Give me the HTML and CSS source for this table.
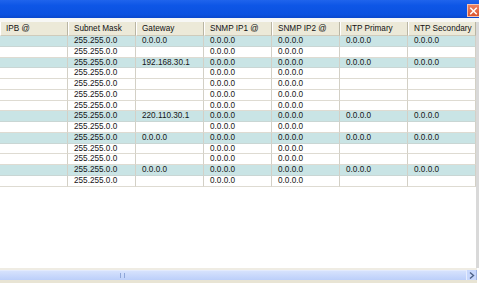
FILE: index.html
```html
<!DOCTYPE html>
<html>
<head>
<meta charset="utf-8">
<link rel="stylesheet" href="styles.css">
</head>
<body>
<div class="window">
  <div class="titlebar">
    <div class="close"><svg width="12" height="12" viewBox="0 0 12 12"><path d="M3 3 L9 9 M9 3 L3 9" stroke="#fff" stroke-width="1.6" stroke-linecap="square"/></svg></div>
  </div>
  <div class="spacer"></div>
  <div class="content">
    <div class="grid">
      <div class="hd">IPB @</div><div class="hd">Subnet Mask</div><div class="hd">Gateway</div><div class="hd">SNMP IP1 @</div><div class="hd">SNMP IP2 @</div><div class="hd">NTP Primary</div><div class="hd">NTP Secondary</div>

      <div class="c t"></div><div class="c t">255.255.0.0</div><div class="c t">0.0.0.0</div><div class="c t">0.0.0.0</div><div class="c t">0.0.0.0</div><div class="c t">0.0.0.0</div><div class="c t">0.0.0.0</div>
      <div class="c"></div><div class="c">255.255.0.0</div><div class="c"></div><div class="c">0.0.0.0</div><div class="c">0.0.0.0</div><div class="c"></div><div class="c"></div>
      <div class="c t"></div><div class="c t">255.255.0.0</div><div class="c t">192.168.30.1</div><div class="c t">0.0.0.0</div><div class="c t">0.0.0.0</div><div class="c t">0.0.0.0</div><div class="c t">0.0.0.0</div>
      <div class="c"></div><div class="c">255.255.0.0</div><div class="c"></div><div class="c">0.0.0.0</div><div class="c">0.0.0.0</div><div class="c"></div><div class="c"></div>
      <div class="c"></div><div class="c">255.255.0.0</div><div class="c"></div><div class="c">0.0.0.0</div><div class="c">0.0.0.0</div><div class="c"></div><div class="c"></div>
      <div class="c"></div><div class="c">255.255.0.0</div><div class="c"></div><div class="c">0.0.0.0</div><div class="c">0.0.0.0</div><div class="c"></div><div class="c"></div>
      <div class="c"></div><div class="c">255.255.0.0</div><div class="c"></div><div class="c">0.0.0.0</div><div class="c">0.0.0.0</div><div class="c"></div><div class="c"></div>
      <div class="c t"></div><div class="c t">255.255.0.0</div><div class="c t">220.110.30.1</div><div class="c t">0.0.0.0</div><div class="c t">0.0.0.0</div><div class="c t">0.0.0.0</div><div class="c t">0.0.0.0</div>
      <div class="c"></div><div class="c">255.255.0.0</div><div class="c"></div><div class="c">0.0.0.0</div><div class="c">0.0.0.0</div><div class="c"></div><div class="c"></div>
      <div class="c t"></div><div class="c t">255.255.0.0</div><div class="c t">0.0.0.0</div><div class="c t">0.0.0.0</div><div class="c t">0.0.0.0</div><div class="c t">0.0.0.0</div><div class="c t">0.0.0.0</div>
      <div class="c"></div><div class="c">255.255.0.0</div><div class="c"></div><div class="c">0.0.0.0</div><div class="c">0.0.0.0</div><div class="c"></div><div class="c"></div>
      <div class="c"></div><div class="c">255.255.0.0</div><div class="c"></div><div class="c">0.0.0.0</div><div class="c">0.0.0.0</div><div class="c"></div><div class="c"></div>
      <div class="c t"></div><div class="c t">255.255.0.0</div><div class="c t">0.0.0.0</div><div class="c t">0.0.0.0</div><div class="c t">0.0.0.0</div><div class="c t">0.0.0.0</div><div class="c t">0.0.0.0</div>
      <div class="c"></div><div class="c">255.255.0.0</div><div class="c"></div><div class="c">0.0.0.0</div><div class="c">0.0.0.0</div><div class="c"></div><div class="c"></div>
    </div>
  </div>
  <div class="hscroll">
    <div class="track">
      <div class="thumb"><span class="grip"></span></div>
      <div class="arrow"><svg width="6" height="7" viewBox="0 0 6 7"><path d="M1 0.5 L4.5 3.5 L1 6.5" fill="none" stroke="#4d6185" stroke-width="1.4"/></svg></div>
    </div>
  </div>
</div>
</body>
</html>
```

FILE: styles.css
```css
* { box-sizing: border-box; }
html, body { margin: 0; padding: 0; background: #fff; }
body { width: 479px; height: 283px; overflow: hidden; font-family: "Liberation Sans", Arial, sans-serif; }

.window { width: 479px; height: 283px; display: flex; flex-direction: column; background: #fff; }

.titlebar {
  height: 18px;
  flex: none;
  background: linear-gradient(#1f64ec 0%, #0e56e6 30%, #0b52e0 80%, #0a48cc 100%);
  display: flex;
  justify-content: flex-end;
  align-items: flex-end;
}
.close {
  width: 12px;
  height: 13px;
  margin-bottom: 1px;
  background: linear-gradient(#ec805f, #da5530);
  border: 1px solid #f4c2b0;
  border-right: none;
  display: flex;
  align-items: center;
  justify-content: flex-start;
}
.close svg { display: block; }

.spacer { height: 4px; flex: none; background: #f7f7f5; }

.content { flex: 1; background: #fff; border-right: 3px solid #d9d9d9; }

.grid {
  display: grid;
  grid-template-columns: 68px 68px 68px 68px 68px 68px 68px;
  grid-template-rows: 14px repeat(14, 10.75px);
  width: 476px;
  font-size: 8.2px;
  color: #151515;
}
.hd {
  background: #ece9d8;
  border-right: 1px solid #b9b5a3;
  border-left: 1px solid #fff;
  border-bottom: 1px solid #cfcbbb;
  padding-left: 5px;
  line-height: 13px;
  white-space: nowrap;
  overflow: hidden;
  color: #111;
}
.c {
  border-right: 1px solid #d3d0c6;
  border-bottom: 1px solid #dedbd2;
  padding-left: 6px;
  line-height: 10px;
  white-space: nowrap;
  overflow: hidden;
}
.c.t { background: #c9e4e5; border-bottom-color: #c9d6d4; }

.hscroll { height: 15px; flex: none; background: #fff; padding-right: 2px; }
.track {
  height: 15px;
  display: flex;
  border-top: 2px solid #efece3;
  border-bottom: 3px solid #e8e4d4;
  background: #c6d6fb;
}
.thumb {
  flex: 1;
  background: linear-gradient(#d6e2fd, #bccffa);
  border-top: 1px solid #e2eafd;
  display: flex;
  justify-content: center;
  align-items: center;
  padding-right: 222px;
}
.grip { width: 5px; height: 5px; border-left: 1px solid #8ea6d8; border-right: 1px solid #8ea6d8; }
.arrow {
  width: 11px;
  background: #c7d7fc;
  border-left: 1px solid #e6edfe;
  border-right: 1px solid #9fb4e2;
  display: flex;
  align-items: center;
  justify-content: center;
}
.arrow svg { display: block; }
```
